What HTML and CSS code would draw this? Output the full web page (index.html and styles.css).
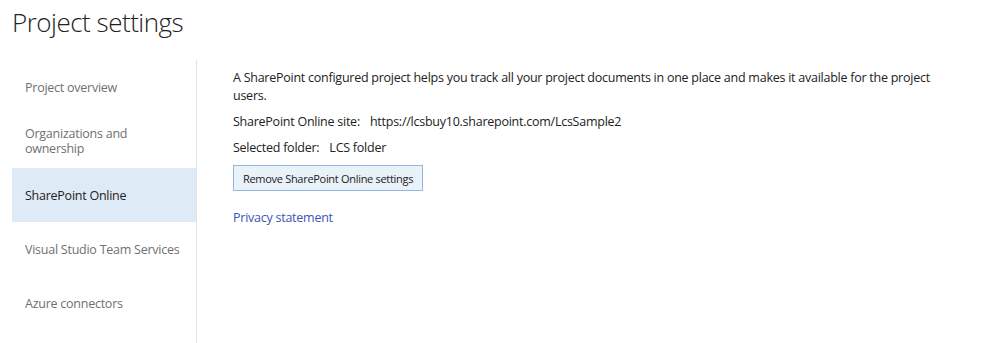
FILE: index.html
```html
<!DOCTYPE html>
<html lang="en">
<head>
    <meta charset="UTF-8">
    <title>Project settings</title>
    <link rel="stylesheet" href="styles.css">
</head>
<body>
    <h1 class="page-title">Project settings</h1>
    <div class="settings">
        <ul class="side-nav">
            <li>Project overview</li>
            <li class="narrow">Organizations and ownership</li>
            <li class="active">SharePoint Online</li>
            <li>Visual Studio Team Services</li>
            <li>Azure connectors</li>
        </ul>
        <div class="content">
            <p class="intro">A SharePoint configured project helps you track all your project documents in one place and makes it available for the project users.</p>
            <p><span class="field-label">SharePoint Online site:</span>https://lcsbuy10.sharepoint.com/LcsSample2</p>
            <p><span class="field-label">Selected folder:</span>LCS folder</p>
            <button class="btn">Remove SharePoint Online settings</button>
            <a class="link" href="#">Privacy statement</a>
        </div>
    </div>
</body>
</html>
```

FILE: styles.css
```css
body {
    margin: 0;
    font-family: "Open Sans", "Noto Sans", sans-serif;
    color: #222;
    background: #fff;
}
.page-title {
    margin: 0;
    padding: 2px 0 0 12px;
    font-size: 26px;
    letter-spacing: -0.5px;
    font-weight: 300;
    color: #222;
    height: 58px;
    line-height: 40px;
}
.settings {
    display: flex;
    padding-left: 12px;
}
.side-nav {
    list-style: none;
    margin: 0;
    padding: 0;
    width: 184px;
    border-right: 1px solid #e3e3e3;
    padding-bottom: 14px;
}
.side-nav li {
    height: 54px;
    display: flex;
    align-items: center;
    padding: 0 6px 0 13px;
    font-size: 12.5px;
    letter-spacing: -0.25px;
    line-height: 15px;
    color: #707070;
}
.side-nav li.narrow {
    padding-right: 40px;
}
.side-nav li.active {
    background: #deeaf6;
    color: #222;
}
.content {
    padding: 9px 0 0 36px;
    font-size: 12.5px;
    letter-spacing: -0.25px;
    line-height: 18px;
    width: 710px;
}
.content p {
    margin: 0 0 8px;
}
.field-label {
    margin-right: 10px;
}
.btn {
    display: block;
    font-family: inherit;
    font-size: 11px;
    letter-spacing: -0.3px;
    color: #222;
    background: #e9f1f9;
    border: 1px solid #8fb8e3;
    height: 26px;
    padding: 0 9px;
    margin-top: 1px;
}
.link {
    display: inline-block;
    margin-top: 18px;
    color: #3a55b4;
    text-decoration: none;
}
```
